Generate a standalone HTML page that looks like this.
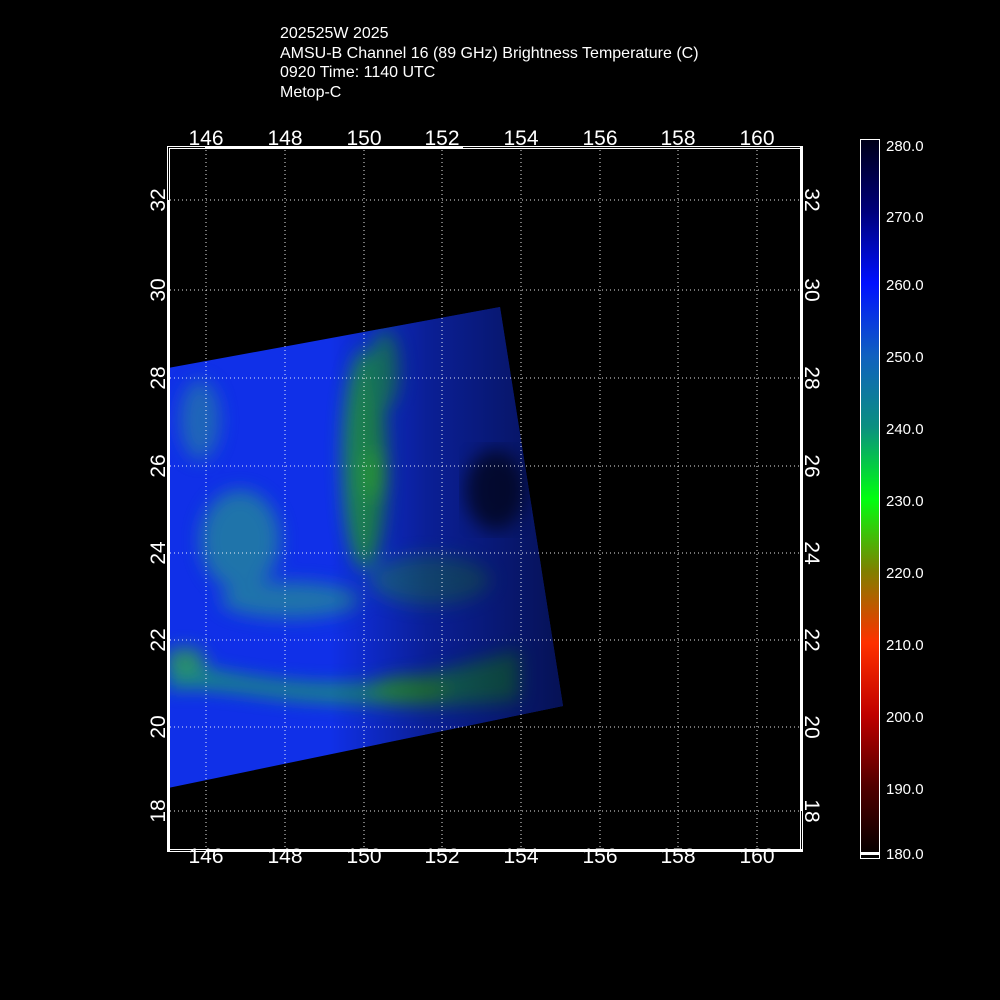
<!DOCTYPE html>
<html><head><meta charset="utf-8"><style>
body{margin:0;background:#000;width:1000px;height:1000px;overflow:hidden;font-family:"Liberation Sans",sans-serif;color:#fff}
.t{position:absolute;left:280px;font-size:16px;line-height:19.5px;top:24px}
</style></head><body>
<div class="t">202525W 2025<br>AMSU-B Channel 16 (89 GHz) Brightness Temperature (C)<br>0920 Time: 1140 UTC<br>Metop-C</div>
<svg width="1000" height="1000" style="position:absolute;left:0;top:0">
<defs>
<clipPath id="sw"><polygon points="168,368 500,307 563,706 168,788"/></clipPath>
<filter id="bl"><feGaussianBlur stdDeviation="9"/></filter>
<linearGradient id="dk" x1="330" x2="570" y1="0" y2="0" gradientUnits="userSpaceOnUse">
<stop offset="0" stop-color="#000" stop-opacity="0"/><stop offset="0.4" stop-color="#000" stop-opacity="0.35"/><stop offset="1" stop-color="#000" stop-opacity="0.65"/></linearGradient>
<linearGradient id="cb" x1="0" x2="0" y1="0" y2="1">
<stop offset="0" stop-color="#000018"/><stop offset="0.1" stop-color="#00007a"/><stop offset="0.2" stop-color="#0010ff"/><stop offset="0.3" stop-color="#1060c0"/><stop offset="0.4" stop-color="#0a9080"/><stop offset="0.5" stop-color="#00ff10"/><stop offset="0.6" stop-color="#808000"/><stop offset="0.7" stop-color="#ff3000"/><stop offset="0.8" stop-color="#c00000"/><stop offset="0.9" stop-color="#500000"/><stop offset="1" stop-color="#000"/></linearGradient>
</defs>
<g clip-path="url(#sw)">
<rect x="160" y="300" width="420" height="500" fill="#1030e8"/>
<g filter="url(#bl)" opacity="0.85">
<path d="M168,660 C250,680 320,690 400,680 C450,670 480,660 520,650 L520,700 C450,710 380,705 300,700 C250,695 200,685 168,690Z" fill="#1a9a70"/>
<ellipse cx="365" cy="460" rx="22" ry="110" fill="#20a040"/>
<ellipse cx="375" cy="475" rx="12" ry="25" fill="#30c020"/>
<ellipse cx="385" cy="370" rx="14" ry="40" fill="#1a9060"/>
<ellipse cx="240" cy="540" rx="40" ry="50" fill="#2080a0"/>
<ellipse cx="290" cy="600" rx="70" ry="18" fill="#2080a0"/>
<ellipse cx="410" cy="690" rx="40" ry="14" fill="#30b030"/>
<ellipse cx="185" cy="660" rx="20" ry="12" fill="#30a050"/>
<ellipse cx="430" cy="580" rx="60" ry="25" fill="#1a70a0"/>
<ellipse cx="200" cy="420" rx="20" ry="40" fill="#2070b0"/>
</g>
<rect x="160" y="300" width="420" height="500" fill="url(#dk)"/>
<ellipse cx="495" cy="490" rx="30" ry="40" fill="#000" opacity="0.6" filter="url(#bl)"/>
</g>
<g stroke="#fff" stroke-width="1" stroke-dasharray="1,3" opacity="0.9">
<line x1="206" y1="150" x2="206" y2="850"/><line x1="285" y1="150" x2="285" y2="850"/><line x1="364" y1="150" x2="364" y2="850"/><line x1="442" y1="150" x2="442" y2="850"/><line x1="521" y1="150" x2="521" y2="850"/><line x1="600" y1="150" x2="600" y2="850"/><line x1="678" y1="150" x2="678" y2="850"/><line x1="757" y1="150" x2="757" y2="850"/>
<line x1="170" y1="200" x2="802" y2="200"/><line x1="170" y1="290" x2="802" y2="290"/><line x1="170" y1="378" x2="802" y2="378"/><line x1="170" y1="466" x2="802" y2="466"/><line x1="170" y1="553" x2="802" y2="553"/><line x1="170" y1="640" x2="802" y2="640"/><line x1="170" y1="727" x2="802" y2="727"/><line x1="170" y1="811" x2="802" y2="811"/>
</g>
<g fill="none" stroke="#fff">
<rect x="167.5" y="146.5" width="635" height="705"/>
<rect x="169.5" y="148.5" width="631" height="701"/>
</g>
<g fill="#fff">
<rect x="205" y="146" width="258" height="3"/>
<rect x="206" y="849" width="596" height="3"/>
<rect x="167" y="200" width="3" height="652"/>
<rect x="800" y="146" width="3" height="665"/>
</g>
<g fill="#fff" font-size="21" text-anchor="middle">
<text x="206" y="145">146</text><text x="285" y="145">148</text><text x="364" y="145">150</text><text x="442" y="145">152</text><text x="521" y="145">154</text><text x="600" y="145">156</text><text x="678" y="145">158</text><text x="757" y="145">160</text>
<text x="206" y="863">146</text><text x="285" y="863">148</text><text x="364" y="863">150</text><text x="442" y="863">152</text><text x="521" y="863">154</text><text x="600" y="863">156</text><text x="678" y="863">158</text><text x="757" y="863">160</text>
</g>
<g fill="#fff" font-size="21" text-anchor="middle">
<text transform="translate(165,200) rotate(-90)">32</text><text transform="translate(165,290) rotate(-90)">30</text><text transform="translate(165,378) rotate(-90)">28</text><text transform="translate(165,466) rotate(-90)">26</text><text transform="translate(165,553) rotate(-90)">24</text><text transform="translate(165,640) rotate(-90)">22</text><text transform="translate(165,727) rotate(-90)">20</text><text transform="translate(165,811) rotate(-90)">18</text>
<text transform="translate(805,200) rotate(90)">32</text><text transform="translate(805,290) rotate(90)">30</text><text transform="translate(805,378) rotate(90)">28</text><text transform="translate(805,466) rotate(90)">26</text><text transform="translate(805,553) rotate(90)">24</text><text transform="translate(805,640) rotate(90)">22</text><text transform="translate(805,727) rotate(90)">20</text><text transform="translate(805,811) rotate(90)">18</text>
</g>
<rect x="860.5" y="139.5" width="19" height="719" fill="url(#cb)" stroke="#fff"/>
<rect x="861" y="852" width="18" height="3" fill="#fff"/>
<g fill="#fff" font-size="15">
<text x="886" y="151">280.0</text><text x="886" y="222">270.0</text><text x="886" y="290">260.0</text><text x="886" y="362">250.0</text><text x="886" y="434">240.0</text><text x="886" y="506">230.0</text><text x="886" y="578">220.0</text><text x="886" y="650">210.0</text><text x="886" y="722">200.0</text><text x="886" y="794">190.0</text><text x="886" y="859">180.0</text>
</g>
</svg>
</body></html>
